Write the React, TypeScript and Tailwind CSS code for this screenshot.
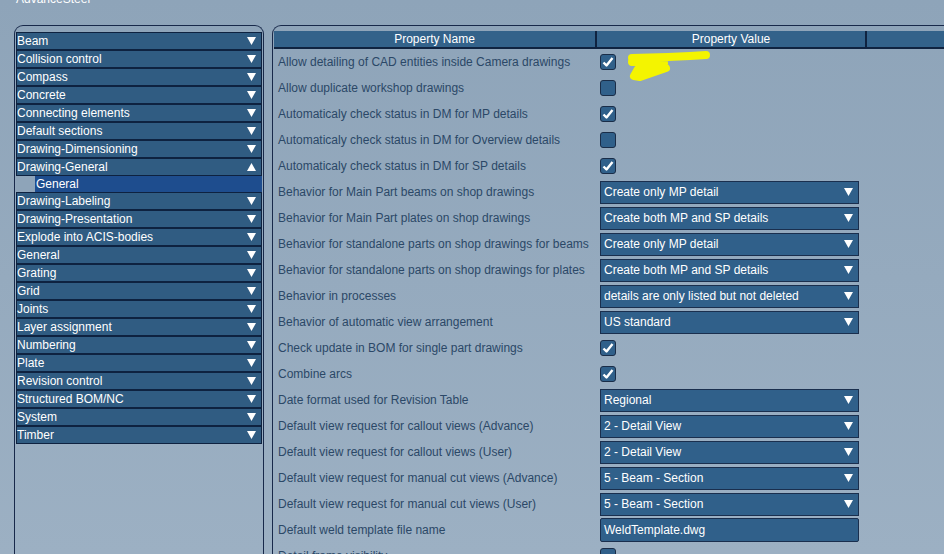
import React from 'react';

type Row = { name: string; kind: 'check' | 'select' | 'text'; value?: string; checked?: boolean };

const categories = [
  'Beam',
  'Collision control',
  'Compass',
  'Concrete',
  'Connecting elements',
  'Default sections',
  'Drawing-Dimensioning',
  'Drawing-General',
  'Drawing-Labeling',
  'Drawing-Presentation',
  'Explode into ACIS-bodies',
  'General',
  'Grating',
  'Grid',
  'Joints',
  'Layer assignment',
  'Numbering',
  'Plate',
  'Revision control',
  'Structured BOM/NC',
  'System',
  'Timber',
];

const rows: Row[] = [
  { name: 'Allow detailing of CAD entities inside Camera drawings', kind: 'check', checked: true },
  { name: 'Allow duplicate workshop drawings', kind: 'check', checked: false },
  { name: 'Automaticaly check status in DM for MP details', kind: 'check', checked: true },
  { name: 'Automaticaly check status in DM for Overview details', kind: 'check', checked: false },
  { name: 'Automaticaly check status in DM for SP details', kind: 'check', checked: true },
  { name: 'Behavior for Main Part beams on shop drawings', kind: 'select', value: 'Create only MP detail' },
  { name: 'Behavior for Main Part plates on shop drawings', kind: 'select', value: 'Create both MP and SP details' },
  { name: 'Behavior for standalone parts on shop drawings for beams', kind: 'select', value: 'Create only MP detail' },
  { name: 'Behavior for standalone parts on shop drawings for plates', kind: 'select', value: 'Create both MP and SP details' },
  { name: 'Behavior in processes', kind: 'select', value: 'details are only listed but not deleted' },
  { name: 'Behavior of automatic view arrangement', kind: 'select', value: 'US standard' },
  { name: 'Check update in BOM for single part drawings', kind: 'check', checked: true },
  { name: 'Combine arcs', kind: 'check', checked: true },
  { name: 'Date format used for Revision Table', kind: 'select', value: 'Regional' },
  { name: 'Default view request for callout views (Advance)', kind: 'select', value: '2 - Detail View' },
  { name: 'Default view request for callout views (User)', kind: 'select', value: '2 - Detail View' },
  { name: 'Default view request for manual cut views (Advance)', kind: 'select', value: '5 - Beam - Section' },
  { name: 'Default view request for manual cut views (User)', kind: 'select', value: '5 - Beam - Section' },
  { name: 'Default weld template file name', kind: 'text', value: 'WeldTemplate.dwg' },
  { name: 'Detail frame visibility', kind: 'check', checked: false },
];

const Arrow = ({ up = false }: { up?: boolean }) => (
  <svg width="9" height="8" viewBox="0 0 9 8" className="shrink-0">
    {up ? <path d="M4.5 0 L9 8 L0 8 Z" fill="#ffffff" /> : <path d="M0 0 L9 0 L4.5 8 Z" fill="#ffffff" />}
  </svg>
);

const CheckBox = ({ checked }: { checked?: boolean }) => (
  <div className="w-[16px] h-[16px] rounded-[3px] border border-[#1a2d48] bg-[#30608a] flex items-center justify-center">
    {checked && (
      <svg width="12" height="12" viewBox="0 0 12 12">
        <path d="M1.5 6.5 L4.5 9.5 L10.5 2" fill="none" stroke="#ffffff" strokeWidth="2.4" strokeLinejoin="round" />
      </svg>
    )}
  </div>
);

const App: React.FC = () => {
  return (
    <div
      className="w-[944px] h-[554px] overflow-hidden relative flex flex-col bg-gradient-to-b from-[#8ea4b9] to-[#9cb0c3] text-[12px]"
      style={{ fontFamily: '"Liberation Sans", Arial, sans-serif' }}
    >
      <div className="h-[25px] shrink-0 pl-[16px]">
        <div className="-mt-[9px] leading-[16px] text-white text-[12px]">AdvanceSteel</div>
      </div>

      <div className="flex flex-1 min-h-0 gap-[8px] pl-[14px]">
        {/* category list */}
        <div className="w-[250px] shrink-0 border border-b-0 border-[#18294a] rounded-t-[9px] pt-[6px] px-[1px]">
          {categories.map((c) => (
            <React.Fragment key={c}>
              <div className="h-[18px] border border-[#0e2240] bg-[#305c82] flex items-center justify-between pl-0 pr-[5px] text-white text-[12px]">
                <span className="leading-none">{c}</span>
                <Arrow up={c === 'Drawing-General'} />
              </div>
              {c === 'Drawing-General' && (
                <div className="h-[16px] flex">
                  <div className="w-[19px] bg-[#8ea4b9]" />
                  <div className="flex-1 bg-[#1e4d8e] text-white text-[12px] flex items-center pl-[1px] leading-none">General</div>
                </div>
              )}
            </React.Fragment>
          ))}
        </div>

        {/* property grid */}
        <div className="flex-1 -mr-[12px] border border-b-0 border-r-0 border-[#18294a] rounded-tl-[9px] pt-[5px] pl-[1px]">
          <div className="flex h-[18px] bg-[#33628a] border-b-2 border-[#0f2340] text-white text-[12px]">
            <div className="w-[323px] flex items-center justify-center border-r-2 border-[#0f2340]">Property Name</div>
            <div className="w-[270px] flex items-center justify-center border-r-2 border-[#0f2340]">Property Value</div>
            <div className="flex-1" />
          </div>
          {rows.map((r) => (
            <div key={r.name} className="flex h-[26px] items-center">
              <div className="w-[325px] pl-[4px] text-[#2b4867] text-[12px] whitespace-nowrap">{r.name}</div>
              <div className="w-[270px] pl-[1px]">
                {r.kind === 'check' && <CheckBox checked={r.checked} />}
                {r.kind === 'select' && (
                  <div className="w-[259px] h-[23px] border border-[#1a2f4e] bg-[#30608a] flex items-center justify-between pl-[3px] pr-[5px] text-white text-[12px]">
                    <span>{r.value}</span>
                    <Arrow />
                  </div>
                )}
                {r.kind === 'text' && (
                  <div className="w-[259px] h-[24px] rounded-[2px] border border-[#1a2f4e] bg-[#30608a] flex items-center pl-[3px] text-white text-[12px]">
                    {r.value}
                  </div>
                )}
              </div>
            </div>
          ))}
        </div>
      </div>

      {/* highlighter scribble */}
      <svg className="absolute left-[624px] top-[48px]" width="90" height="36" viewBox="0 0 90 36">
        <path
          d="M8 10 L44 9 L66 8 L82 7 M8 14 L40 13 M40 15 L14 21 L10 28 L16 29 L42 20"
          fill="none"
          stroke="#f4f400"
          strokeWidth="8"
          strokeLinecap="round"
          strokeLinejoin="round"
        />
      </svg>
    </div>
  );
};

export default App;
